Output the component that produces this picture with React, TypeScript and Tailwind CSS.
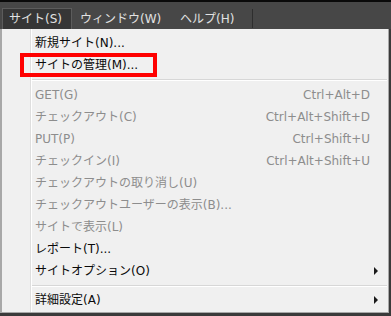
import React from "react";

type Item =
  | { kind: "sep"; h: number }
  | { kind: "item"; label: string; shortcut?: string; disabled?: boolean; sub?: boolean };

const items: Item[] = [
  { kind: "item", label: "新規サイト(N)..." },
  { kind: "item", label: "サイトの管理(M)..." },
  { kind: "sep", h: 8 },
  { kind: "item", label: "GET(G)", shortcut: "Ctrl+Alt+D", disabled: true },
  { kind: "item", label: "チェックアウト(C)", shortcut: "Ctrl+Alt+Shift+D", disabled: true },
  { kind: "item", label: "PUT(P)", shortcut: "Ctrl+Shift+U", disabled: true },
  { kind: "item", label: "チェックイン(I)", shortcut: "Ctrl+Alt+Shift+U", disabled: true },
  { kind: "item", label: "チェックアウトの取り消し(U)", disabled: true },
  { kind: "item", label: "チェックアウトユーザーの表示(B)...", disabled: true },
  { kind: "item", label: "サイトで表示(L)", disabled: true },
  { kind: "item", label: "レポート(T)..." },
  { kind: "item", label: "サイトオプション(O)", sub: true },
  { kind: "sep", h: 7 },
  { kind: "item", label: "詳細設定(A)", sub: true },
];

const font = {
  fontFamily: '"DejaVu Sans", "Noto Sans CJK JP", sans-serif',
};

export default function App() {
  return (
    <div className="relative w-[391px] h-[316px] bg-[#3a3a3a] overflow-hidden text-[12px]" style={font}>
      {/* menu bar */}
      <div className="h-[29px] bg-[#474747] border-t-2 border-[#0a0a0a] flex items-end pl-[2px] text-[#e2e2e2]">
        <div className="h-[21px] w-[70px] bg-[#363636] border border-b-0 border-[#5c5c5c] flex items-center pl-[6px] leading-none whitespace-nowrap">
          サイト(S)
        </div>
        <div className="h-[21px] w-[100px] flex items-center pl-[8px] leading-none whitespace-nowrap">ウィンドウ(W)</div>
        <div className="h-[21px] w-[80px] flex items-center pl-[8px] leading-none whitespace-nowrap">ヘルプ(H)</div>
        <div className="w-px h-[19px] bg-[#2e2e2e] mb-[1px]" />
      </div>
      {/* dropdown panel */}
      <div className="relative h-[284px] w-[389px] bg-[#f0f0f0] border-l-2 border-r border-b border-[#a8a8a8] pt-[3px]">
        {/* gutter line */}
        <div className="absolute left-[28px] top-0 bottom-0 w-px bg-[#dedede]" />
        <div className="absolute left-[29px] top-0 bottom-0 w-px bg-white" />
        <div className="flex flex-col">
          {items.map((it, i) =>
            it.kind === "sep" ? (
              <div key={i} className="flex flex-col justify-center pl-[30px] pr-[1px]" style={{ height: it.h }}>
                <div className="h-px bg-[#d7d7d7]" />
                <div className="h-px bg-white" />
              </div>
            ) : (
              <div
                key={i}
                className={
                  "h-[22px] flex items-center pl-[33px] pr-[18px] leading-none " +
                  (it.disabled ? "text-[#8d8d8d]" : "text-[#0a0a0a]")
                }
              >
                <span className="flex-1 whitespace-nowrap">{it.label}</span>
                {it.shortcut && <span className="whitespace-nowrap">{it.shortcut}</span>}
                {it.sub && (
                  <svg width="5" height="8" viewBox="0 0 5 8" className="mr-[-9px]">
                    <path d="M0 0 L4 4 L0 8 Z" fill="#1a1a1a" />
                  </svg>
                )}
              </div>
            )
          )}
        </div>
      </div>
      {/* annotation highlight */}
      <div className="absolute left-[20px] top-[53px] w-[137px] h-[24px] border-4 border-[#ff0000]" />
    </div>
  );
}
